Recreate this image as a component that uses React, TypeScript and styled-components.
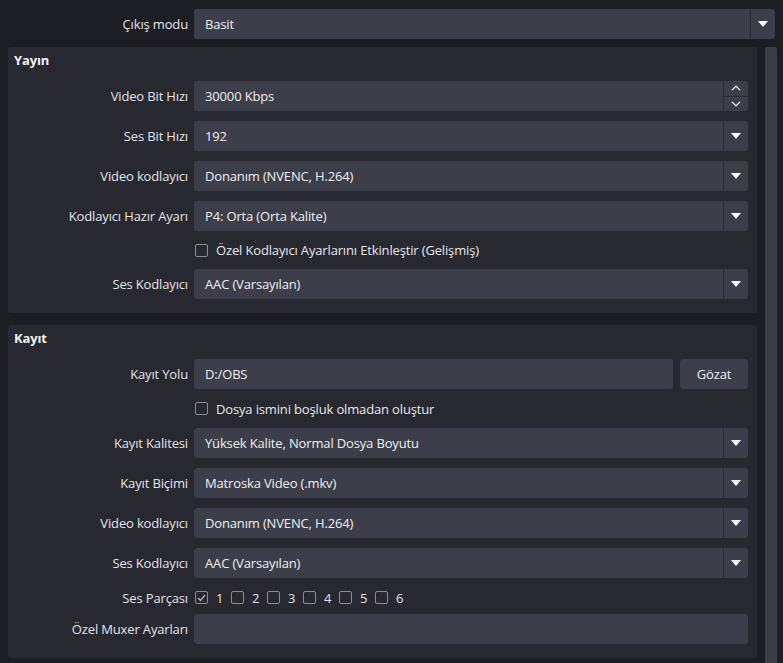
import styled, { createGlobalStyle } from "styled-components";

const GlobalStyle = createGlobalStyle`
    html, body {
        margin: 0;
        padding: 0;
        background: #1d1e24;
    }
    body {
        font-family: "Open Sans", "Noto Sans", sans-serif;
        font-size: 13px;
        letter-spacing: -0.15px;
        color: #e4e4e8;
    }
`;

const Page = styled.div`
    width: 783px;
    height: 663px;
    overflow: hidden;
    box-sizing: border-box;
    padding: 9px 6px 0 8px;
    background: #1d1e24;
`;

const Row = styled.div<{ $h?: number; $mt?: number }>`
    display: grid;
    grid-template-columns: 180px 1fr;
    column-gap: 6px;
    align-items: center;
    min-height: ${(p) => p.$h ?? 30}px;
    margin-top: ${(p) => p.$mt ?? 10}px;
`;

const TopRow = styled(Row)`
    margin-top: 0;
    padding-right: 2px;
`;

const Label = styled.span`
    text-align: right;
    color: #e4e4e8;
    white-space: nowrap;
    line-height: 16px;
    align-self: center;
`;

const Scroller = styled.div`
    display: flex;
    gap: 8px;
    margin-top: 8px;
`;

const Groups = styled.div`
    flex: 1;
    display: flex;
    flex-direction: column;
    gap: 12px;
`;

const ScrollBar = styled.div`
    width: 12px;
    height: 620px;
    border-radius: 2px;
    background: #3a3c47;
`;

const Group = styled.div`
    background: #272830;
    border-radius: 3px;
    padding: 3px 9px 14px 0;
`;

const GroupTitle = styled.div`
    font-weight: 700;
    padding-left: 6px;
    height: 20px;
    line-height: 20px;
    color: #f2f2f4;
`;

const Field = styled.div`
    display: flex;
    align-items: center;
    height: 30px;
    background: #3c3e4a;
    border-radius: 3px;
    color: #f0f0f2;
`;

const FieldText = styled.span`
    flex: 1;
    padding-left: 11px;
    white-space: nowrap;
`;

const ArrowCell = styled.div`
    width: 24px;
    height: 100%;
    border-left: 1px solid #2a2b33;
    display: flex;
    align-items: center;
    justify-content: center;
`;

const Triangle = styled.div`
    width: 0;
    height: 0;
    border-left: 5px solid transparent;
    border-right: 5px solid transparent;
    border-top: 6px solid #ffffff;
`;

const SpinCell = styled.div`
    width: 24px;
    height: 100%;
    border-left: 1px solid #2a2b33;
    display: flex;
    flex-direction: column;
`;

const SpinHalf = styled.div<{ $top?: boolean }>`
    flex: 1;
    display: flex;
    align-items: center;
    justify-content: center;
    border-bottom: ${(p) => (p.$top ? "1px solid #2a2b33" : "none")};
`;

const PathRow = styled.div`
    display: flex;
    gap: 7px;
`;

const PathField = styled(Field)`
    flex: 1;
`;

const Button = styled.div`
    width: 68px;
    height: 30px;
    background: #3c3e4a;
    border-radius: 4px;
    display: flex;
    align-items: center;
    justify-content: center;
    color: #f0f0f2;
`;

const CheckLine = styled.div`
    display: flex;
    align-items: center;
    gap: 8px;
    padding-left: 1px;
    white-space: nowrap;
    color: #e8e8ec;
`;

const Box = styled.div`
    width: 13px;
    height: 13px;
    box-sizing: border-box;
    border: 1px solid #8a8c96;
    border-radius: 2px;
    display: flex;
    align-items: center;
    justify-content: center;
    flex: none;
`;

const Tracks = styled.div`
    display: flex;
    align-items: center;
    padding-left: 1px;
`;

const Track = styled.div`
    display: flex;
    align-items: center;
    gap: 8px;
    width: 36px;
`;

function Combo({ value }: { value: string }) {
    return (
        <Field>
            <FieldText>{value}</FieldText>
            <ArrowCell>
                <Triangle />
            </ArrowCell>
        </Field>
    );
}

function Chevron({ up }: { up?: boolean }) {
    return (
        <svg width="10" height="6" viewBox="0 0 10 6">
            <path
                d={up ? "M1 5.2 L5 1.2 L9 5.2" : "M1 0.8 L5 4.8 L9 0.8"}
                fill="none"
                stroke="#ffffff"
                strokeWidth="1.2"
            />
        </svg>
    );
}

function Tick() {
    return (
        <svg width="9" height="8" viewBox="0 0 9 8">
            <path d="M1 4 L3.5 6.5 L8 1" fill="none" stroke="#b8bac2" strokeWidth="1.2" />
        </svg>
    );
}

function Check({ checked, label }: { checked?: boolean; label: string }) {
    return (
        <CheckLine>
            <Box>{checked && <Tick />}</Box>
            {label}
        </CheckLine>
    );
}

export default function App() {
    return (
        <Page>
            <GlobalStyle />
            <TopRow>
                <Label>Çıkış modu</Label>
                <Combo value="Basit" />
            </TopRow>
            <Scroller>
                <Groups>
                    <Group>
                        <GroupTitle>Yayın</GroupTitle>
                        <Row $mt={11}>
                            <Label>Video Bit Hızı</Label>
                            <Field>
                                <FieldText>30000 Kbps</FieldText>
                                <SpinCell>
                                    <SpinHalf $top>
                                        <Chevron up />
                                    </SpinHalf>
                                    <SpinHalf>
                                        <Chevron />
                                    </SpinHalf>
                                </SpinCell>
                            </Field>
                        </Row>
                        <Row>
                            <Label>Ses Bit Hızı</Label>
                            <Combo value="192" />
                        </Row>
                        <Row>
                            <Label>Video kodlayıcı</Label>
                            <Combo value="Donanım (NVENC, H.264)" />
                        </Row>
                        <Row>
                            <Label>Kodlayıcı Hazır Ayarı</Label>
                            <Combo value="P4: Orta (Orta Kalite)" />
                        </Row>
                        <Row $h={18}>
                            <span />
                            <Check label="Özel Kodlayıcı Ayarlarını Etkinleştir (Gelişmiş)" />
                        </Row>
                        <Row>
                            <Label>Ses Kodlayıcı</Label>
                            <Combo value="AAC (Varsayılan)" />
                        </Row>
                    </Group>
                    <Group>
                        <GroupTitle>Kayıt</GroupTitle>
                        <Row $mt={11}>
                            <Label>Kayıt Yolu</Label>
                            <PathRow>
                                <PathField>
                                    <FieldText>D:/OBS</FieldText>
                                </PathField>
                                <Button>Gözat</Button>
                            </PathRow>
                        </Row>
                        <Row $h={19}>
                            <span />
                            <Check label="Dosya ismini boşluk olmadan oluştur" />
                        </Row>
                        <Row>
                            <Label>Kayıt Kalitesi</Label>
                            <Combo value="Yüksek Kalite, Normal Dosya Boyutu" />
                        </Row>
                        <Row>
                            <Label>Kayıt Biçimi</Label>
                            <Combo value="Matroska Video (.mkv)" />
                        </Row>
                        <Row>
                            <Label>Video kodlayıcı</Label>
                            <Combo value="Donanım (NVENC, H.264)" />
                        </Row>
                        <Row>
                            <Label>Ses Kodlayıcı</Label>
                            <Combo value="AAC (Varsayılan)" />
                        </Row>
                        <Row $h={19}>
                            <Label>Ses Parçası</Label>
                            <Tracks>
                                {[1, 2, 3, 4, 5, 6].map((n) => (
                                    <Track key={n}>
                                        <Box>{n === 1 && <Tick />}</Box>
                                        {n}
                                    </Track>
                                ))}
                            </Tracks>
                        </Row>
                        <Row $mt={7}>
                            <Label>Özel Muxer Ayarları</Label>
                            <Field />
                        </Row>
                    </Group>
                </Groups>
                <ScrollBar />
            </Scroller>
        </Page>
    );
}
